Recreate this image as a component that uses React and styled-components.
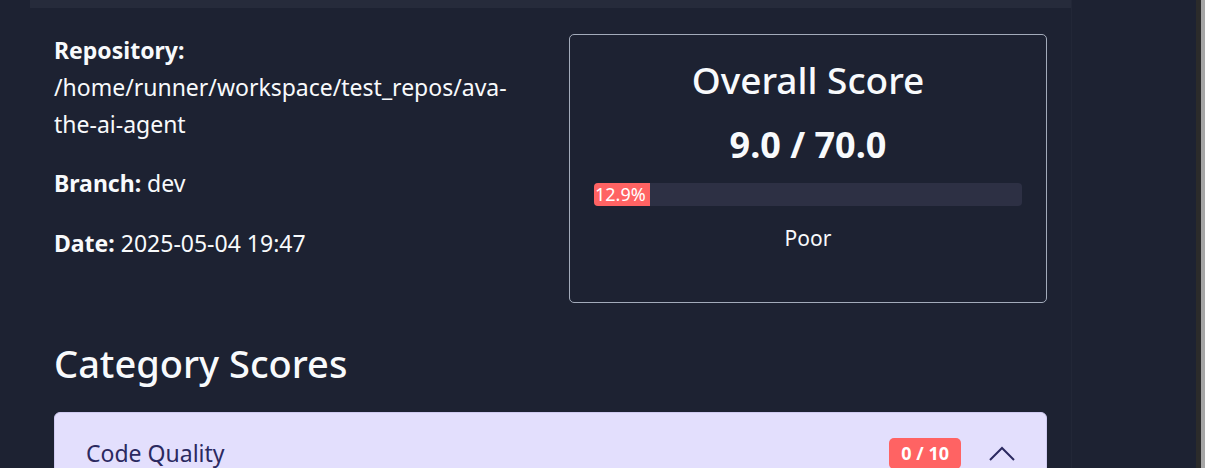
import styled, { createGlobalStyle } from 'styled-components';

const GlobalStyle = createGlobalStyle`
  html, body {
    margin: 0;
    padding: 0;
    height: 100%;
    overflow: hidden;
    background: #1d2232;
  }
  body {
    font-family: "Noto Sans", "Open Sans", sans-serif;
    color: #f8fafc;
  }
`;

const Screen = styled.div`
  display: flex;
  height: 468px;
  overflow: hidden;
`;

const Page = styled.div`
  flex: 1;
  padding-left: 30px;
`;

const Container = styled.main`
  width: 1042px;
  min-height: 468px;
  box-sizing: border-box;
  border-right: 1px solid #222737;
`;

const HeaderEdge = styled.div`
  height: 8px;
  background: #262b3b;
`;

const Content = styled.div`
  padding: 24px 24px 0;
`;

const Summary = styled.section`
  display: grid;
  grid-template-columns: 1fr 478px;
  gap: 40px;
  align-items: start;
  margin-bottom: 37px;
`;

const Info = styled.div`
  padding-top: 0;
`;

const InfoLine = styled.p`
  margin: 0 0 23px;
  font-size: 23px;
  line-height: 36.8px;
  overflow-wrap: break-word;

  strong {
    font-weight: 700;
  }
`;

const ScoreCard = styled.div`
  border: 1px solid #a3abba;
  border-radius: 5px;
  padding: 22px 24px 49px;
  text-align: center;
  margin-top: 2px;
`;

const ScoreTitle = styled.h2`
  margin: 0;
  font-size: 37px;
  font-weight: 500;
  line-height: 46px;
`;

const ScoreValue = styled.div`
  margin-top: 20px;
  font-size: 36px;
  font-weight: 700;
  line-height: 44px;
`;

const Track = styled.div`
  margin-top: 16px;
  height: 23px;
  background: #2d3044;
  border-radius: 4px;
  overflow: hidden;
  display: flex;
`;

const Fill = styled.div`
  background: #ff6363;
  color: #ffffff;
  font-size: 18px;
  line-height: 23px;
  text-align: left;
  white-space: nowrap;
  padding-left: 1px;
`;

const Rating = styled.div`
  margin-top: 17px;
  font-size: 21px;
  line-height: 30px;
`;

const SectionTitle = styled.h2`
  margin: 0 0 26px;
  font-size: 38px;
  font-weight: 500;
  line-height: 46px;
`;

const Accordion = styled.div`
  background: #e3dffd;
  border: 1px solid #cfcaf0;
  border-radius: 6px;
  padding: 24px 30px 24px 31px;
  display: flex;
  align-items: center;
  gap: 27px;
  color: #2b2960;
`;

const AccordionTitle = styled.span`
  flex: 1;
  font-size: 23px;
`;

const Badge = styled.span`
  background: ${(p) => p.color};
  color: #ffffff;
  font-weight: 700;
  font-size: 18px;
  line-height: 21px;
  padding: 5px 12px;
  border-radius: 5px;
`;

const Scrollbar = styled.div`
  width: 9px;
  display: flex;
`;

const ScrollTrack = styled.div`
  width: 5px;
  background: #2b2b2b;
`;

const ScrollThumb = styled.div`
  width: 4px;
  background: #a6a6a6;
`;

const Chevron = () => (
  <svg width="28" height="18" viewBox="0 0 28 18" fill="none">
    <path d="M2 16 L14 4 L26 16" stroke="#2b2960" strokeWidth="2" />
  </svg>
);

const score = 9.0;
const maxScore = 70.0;

export default function App() {
  const pct = (score / maxScore) * 100;
  return (
    <Screen>
      <GlobalStyle />
      <Page>
        <Container>
          <HeaderEdge />
          <Content>
            <Summary>
              <Info>
                <InfoLine>
                  <strong>Repository:</strong> /home/runner/workspace/test_repos/ava-the-ai-agent
                </InfoLine>
                <InfoLine>
                  <strong>Branch:</strong> dev
                </InfoLine>
                <InfoLine>
                  <strong>Date:</strong> 2025-05-04 19:47
                </InfoLine>
              </Info>
              <ScoreCard>
                <ScoreTitle>Overall Score</ScoreTitle>
                <ScoreValue>9.0 / 70.0</ScoreValue>
                <Track>
                  <Fill style={{ width: `${pct}%` }}>{pct.toFixed(1)}%</Fill>
                </Track>
                <Rating>Poor</Rating>
              </ScoreCard>
            </Summary>
            <SectionTitle>Category Scores</SectionTitle>
            <Accordion>
              <AccordionTitle>Code Quality</AccordionTitle>
              <Badge color="#ff6363">0 / 10</Badge>
              <Chevron />
            </Accordion>
          </Content>
        </Container>
      </Page>
      <Scrollbar>
        <ScrollTrack />
        <ScrollThumb />
      </Scrollbar>
    </Screen>
  );
}
